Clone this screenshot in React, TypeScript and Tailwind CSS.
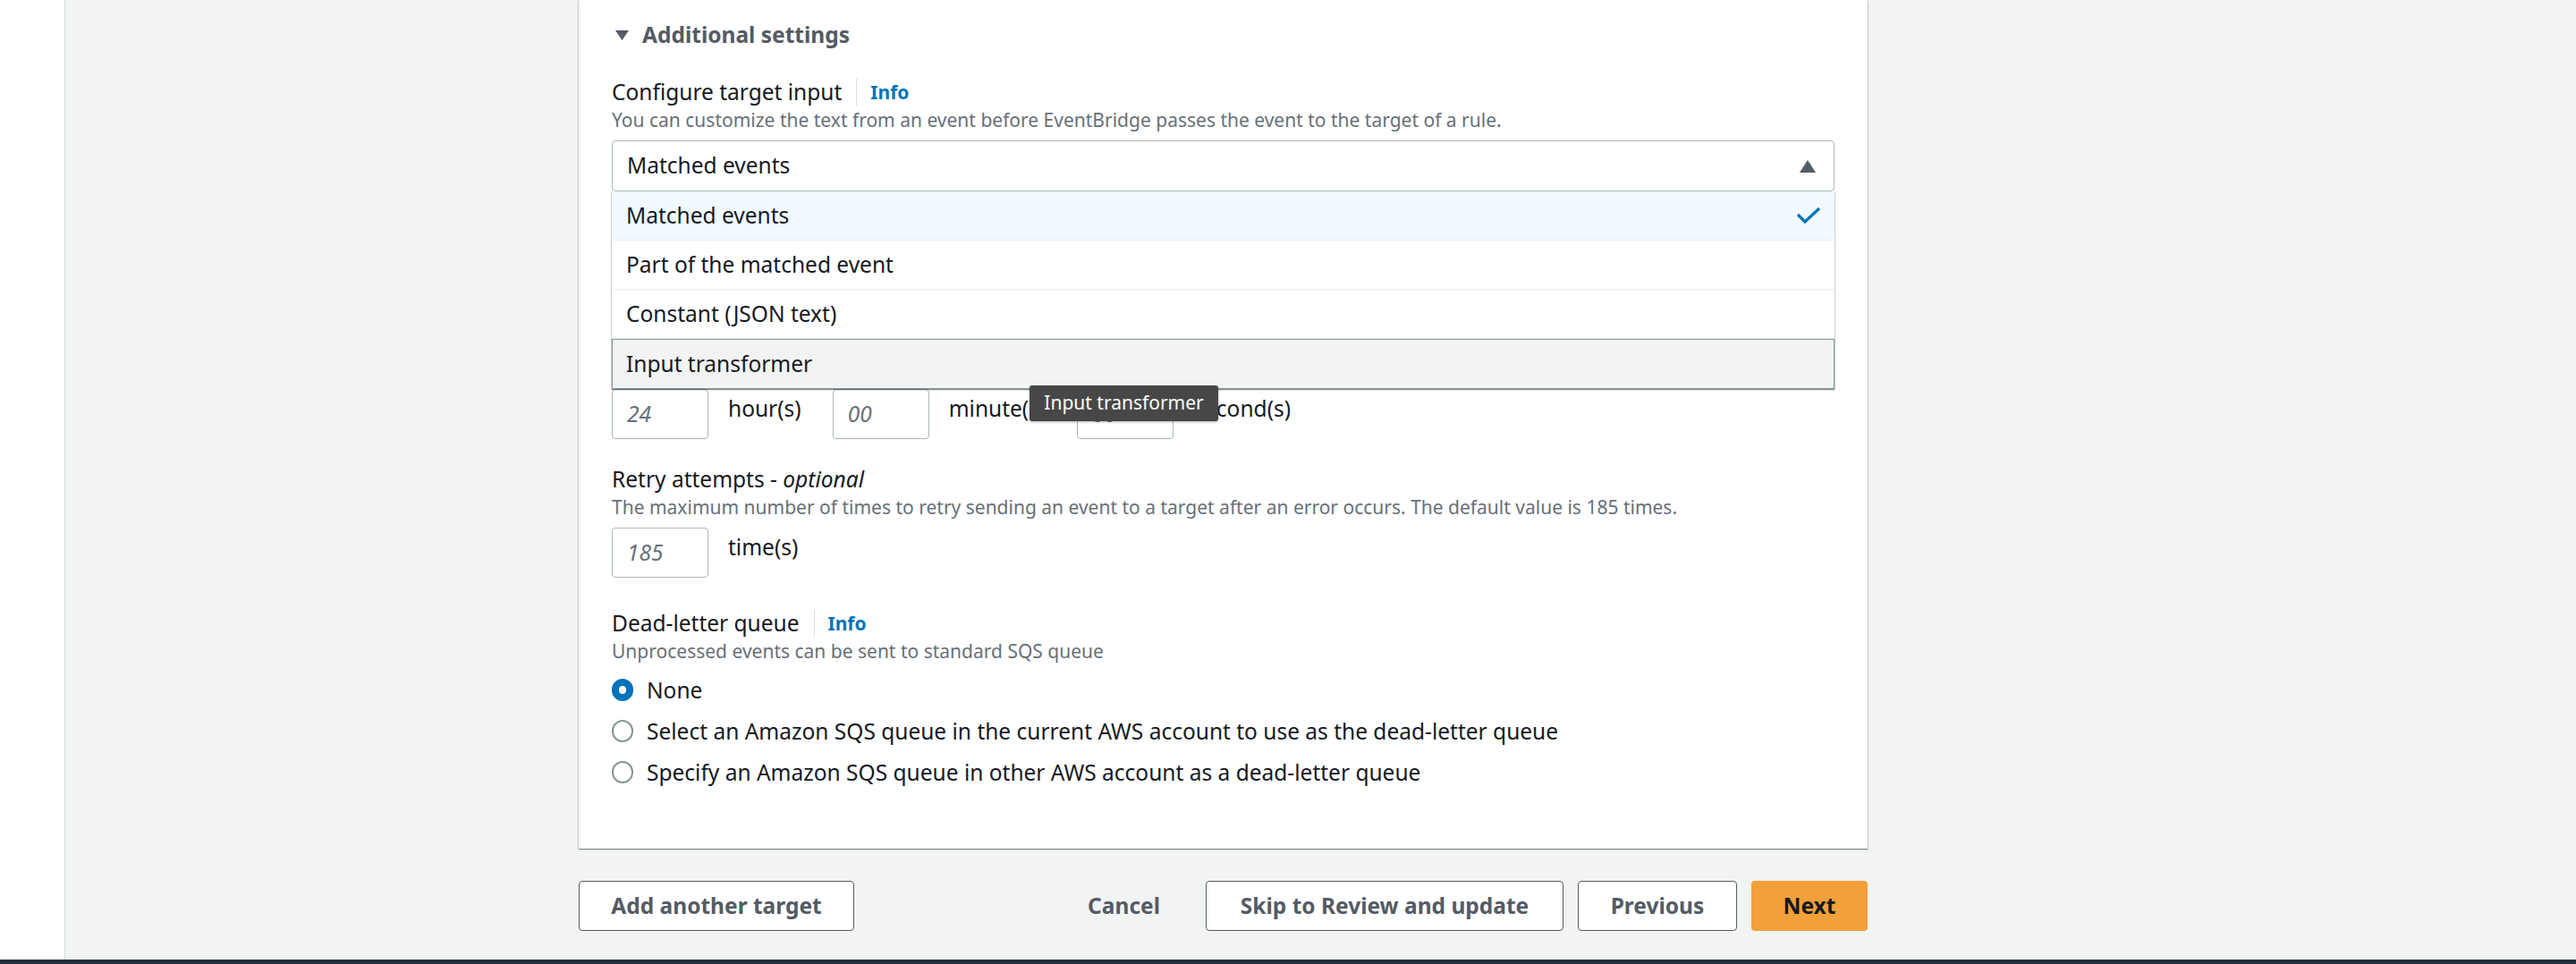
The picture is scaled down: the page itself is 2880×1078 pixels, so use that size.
import React from "react";

const font = "font-['Noto_Sans','Open_Sans',sans-serif]";

function Label({ children, info }: { children: React.ReactNode; info?: boolean }) {
  return (
    <div className="flex h-[35px] items-center">
      <span className="text-[24.5px] leading-[35px] text-[#16191f]">{children}</span>
      {info && (
        <>
          <span className="ml-[16px] h-[30px] w-px bg-[#d5dbdb]" />
          <span className="ml-[15px] text-[21px] font-bold leading-[28px] text-[#0073bb]">Info</span>
        </>
      )}
    </div>
  );
}

function Desc({ children }: { children: React.ReactNode }) {
  return <div className="text-[21px] leading-[28px] text-[#687078]">{children}</div>;
}

function NumBox({ value }: { value: string }) {
  return (
    <div className="flex h-[56px] w-[108px] items-center rounded-[4px] border border-[#aab7b8] bg-white pl-[16px] text-[24.5px] italic text-[#687078]">
      {value}
    </div>
  );
}

function Radio({ checked, label }: { checked?: boolean; label: string }) {
  return (
    <div className="flex h-[46px] items-center gap-[15px]">
      {checked ? (
        <span className="h-[25px] w-[24px] rounded-full border-[8px] border-[#0073bb] bg-white" />
      ) : (
        <span className="h-[25px] w-[24px] rounded-full border-2 border-[#879596] bg-white" />
      )}
      <span className="text-[24.5px] leading-[35px] text-[#16191f]">{label}</span>
    </div>
  );
}

export default function App() {
  const options = ["Matched events", "Part of the matched event", "Constant (JSON text)"];
  return (
    <div className={`flex h-[1078px] flex-col ${font}`}>
      <div className="flex min-h-0 flex-1">
        <div className="w-[73px] shrink-0 border-r border-[#d5dbdb] bg-white" />
        <main className="flex flex-1 flex-col bg-[#f2f3f3] pl-[574px]">
          <section className="w-[1441px] bg-white px-[37px] pb-[63px] pt-[22px] shadow-[0_1px_1px_0_rgba(0,28,36,0.3),1px_1px_1px_0_rgba(0,28,36,0.15),-1px_1px_1px_0_rgba(0,28,36,0.15)]">
            <div className="flex h-[35px] items-center">
              <svg width="15" height="11" viewBox="0 0 15 11" className="ml-[4px]">
                <polygon points="0,0 15,0 7.5,11" fill="#545b64" />
              </svg>
              <span className="ml-[15px] text-[24.5px] font-bold text-[#545b64]">Additional settings</span>
            </div>

            <div className="mt-[28px]">
              <Label info>Configure target input</Label>
              <Desc>You can customize the text from an event before EventBridge passes the event to the target of a rule.</Desc>
            </div>

            <div className="relative mt-[9px]">
              <div className="flex h-[57px] items-center justify-between rounded-[4px] border border-[#aab7b8] bg-white pl-[16px] pr-[20px]">
                <span className="text-[24.5px] text-[#16191f]">Matched events</span>
                <svg width="18" height="14" viewBox="0 0 18 14">
                  <polygon points="9,0 18,14 0,14" fill="#545b64" />
                </svg>
              </div>

              <div className="absolute left-0 right-0 top-full z-10 bg-white shadow-[0_1px_1px_0_rgba(0,28,36,0.3),1px_1px_1px_0_rgba(0,28,36,0.15),-1px_1px_1px_0_rgba(0,28,36,0.15)]">
                {options.map((o, i) => (
                  <div
                    key={o}
                    className={`flex h-[55px] items-center justify-between border-b border-[#eaeded] pl-[16px] pr-[15px] text-[24.5px] text-[#16191f] ${
                      i === 0 ? "bg-[#f1faff]" : "bg-white"
                    }`}
                  >
                    <span>{o}</span>
                    {i === 0 && (
                      <svg width="28" height="20" viewBox="0 0 28 20">
                        <polyline points="2,9 10,17 26,2" fill="none" stroke="#0073bb" strokeWidth="3.2" />
                      </svg>
                    )}
                  </div>
                ))}
                <div className="flex h-[56px] items-center border border-[#879596] bg-[#f2f3f3] pl-[15px] text-[24.5px] text-[#16191f]">
                  Input transformer
                </div>
              </div>
            </div>

            {/* space of the fields covered by the open dropdown */}
            <div className="h-[221px]" />

            <div className="relative flex h-[56px] items-start gap-[35px]">
              <div className="flex items-start gap-[22px]">
                <NumBox value="24" />
                <span className="pt-[4px] text-[24.5px] leading-[35px] text-[#16191f]">hour(s)</span>
              </div>
              <div className="flex items-start gap-[22px]">
                <NumBox value="00" />
                <span className="pt-[4px] text-[24.5px] leading-[35px] text-[#16191f]">minute(s)</span>
              </div>
              <div className="flex items-start gap-[22px]">
                <NumBox value="00" />
                <span className="pt-[4px] text-[24.5px] leading-[35px] text-[#16191f]">second(s)</span>
              </div>
              <div className="absolute left-[467px] top-[-4px] z-20 flex h-[40px] w-[211px] items-center justify-center rounded-[3px] bg-[#474747] text-[21px] text-white shadow-[0_1px_3px_rgba(0,0,0,0.3)]">
                Input transformer
              </div>
            </div>

            <div className="mt-[27px]">
              <Label>
                Retry attempts - <i>optional</i>
              </Label>
              <Desc>The maximum number of times to retry sending an event to a target after an error occurs. The default value is 185 times.</Desc>
            </div>
            <div className="mt-[9px] flex items-start gap-[22px]">
              <NumBox value="185" />
              <span className="pt-[4px] text-[24.5px] leading-[35px] text-[#16191f]">time(s)</span>
            </div>

            <div className="mt-[33px]">
              <Label info>Dead-letter queue</Label>
              <Desc>Unprocessed events can be sent to standard SQS queue</Desc>
            </div>
            <div className="mt-[6px]">
              <Radio checked label="None" />
              <Radio label="Select an Amazon SQS queue in the current AWS account to use as the dead-letter queue" />
              <Radio label="Specify an Amazon SQS queue in other AWS account as a dead-letter queue" />
            </div>
          </section>

          <div className="mt-[36px] flex w-[1441px] items-center justify-between">
            <button className="flex h-[56px] w-[308px] items-center justify-center rounded-[4px] border border-[#545b64] bg-white text-[24.5px] font-bold text-[#545b64]">
              Add another target
            </button>
            <div className="flex items-center gap-[16px]">
              <button className="flex h-[56px] items-center px-[35px] text-[24.5px] font-bold text-[#545b64]">Cancel</button>
              <button className="flex h-[56px] w-[400px] items-center justify-center rounded-[4px] border border-[#545b64] bg-white text-[24.5px] font-bold text-[#545b64]">
                Skip to Review and update
              </button>
              <button className="flex h-[56px] w-[178px] items-center justify-center rounded-[4px] border border-[#545b64] bg-white text-[24.5px] font-bold text-[#545b64]">
                Previous
              </button>
              <button className="flex h-[56px] w-[130px] items-center justify-center rounded-[4px] bg-[#f1a03a] text-[24.5px] font-bold text-[#16191f]">
                Next
              </button>
            </div>
          </div>
        </main>
      </div>
      <div className="h-[5px] shrink-0 bg-[#232f3e]" />
    </div>
  );
}
